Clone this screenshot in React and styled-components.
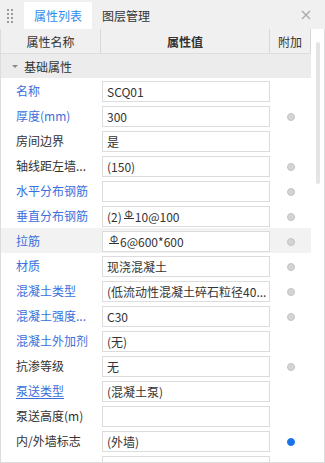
import React from "react";
import styled, { createGlobalStyle } from "styled-components";

const GlobalStyle = createGlobalStyle`
  html, body {
    margin: 0;
    padding: 0;
    background: #ffffff;
  }
  * {
    box-sizing: border-box;
  }
`;

const rows = [
  { name: "名称", value: "SCQ01", link: true, dot: "" },
  { name: "厚度(mm)", value: "300", link: true, dot: "gray" },
  { name: "房间边界", value: "是", dot: "" },
  { name: "轴线距左墙...", value: "(150)", dot: "gray" },
  { name: "水平分布钢筋", value: "", link: true, dot: "gray" },
  { name: "垂直分布钢筋", value: ["(2)", "10@100"], link: true, dot: "gray" },
  { name: "拉筋", value: ["", "6@600*600"], link: true, dot: "gray", active: true },
  { name: "材质", value: "现浇混凝土", link: true, dot: "gray" },
  { name: "混凝土类型", value: "(低流动性混凝土碎石粒径40...", link: true, dot: "gray" },
  { name: "混凝土强度...", value: "C30", link: true, dot: "gray" },
  { name: "混凝土外加剂", value: "(无)", link: true, dot: "" },
  { name: "抗渗等级", value: "无", dot: "gray" },
  { name: "泵送类型", value: "(混凝土泵)", link: true, underline: true, dot: "" },
  { name: "泵送高度(m)", value: "", dot: "" },
  { name: "内/外墙标志", value: "(外墙)", dot: "blue" },
  { name: "", value: "", dot: "" },
];

const PropertyPanel = () => {
  return (
    <Panel>
      <TabBar>
        <Handle>
          {Array.from({ length: 8 }).map((_, i) => (
            <span key={i} />
          ))}
        </Handle>
        <Tab active>属性列表</Tab>
        <Tab>图层管理</Tab>
        <Close>
          <svg width="10" height="10" viewBox="0 0 10 10">
            <path d="M1 1L9 9M9 1L1 9" stroke="#a8a8a8" strokeWidth="1.2" />
          </svg>
        </Close>
      </TabBar>
      <Body>
        <Table>
          <HeaderRow>
            <HeadCell>属性名称</HeadCell>
            <HeadCell strong>属性值</HeadCell>
            <HeadCell>附加</HeadCell>
          </HeaderRow>
          <GroupRow>
            <Caret />
            基础属性
          </GroupRow>
          {rows.map((row, i) => (
            <Row key={i} active={row.active}>
              <Label link={row.link} underline={row.underline}>
                {row.name}
              </Label>
              <ValueCell>
                <ValueBox>
                  {Array.isArray(row.value) ? (
                    <>
                      {row.value[0]}
                      <Rebar>Φ</Rebar>
                      {row.value[1]}
                    </>
                  ) : (
                    row.value
                  )}
                </ValueBox>
              </ValueCell>
              <DotCell>{row.dot && <Dot kind={row.dot} />}</DotCell>
            </Row>
          ))}
        </Table>
        <Scroll>
          <Thumb />
        </Scroll>
      </Body>
    </Panel>
  );
};

const Panel = styled.div`
  width: 325px;
  height: 463px;
  display: flex;
  flex-direction: column;
  overflow: hidden;
  font-family: "Noto Sans CJK SC", "Noto Sans", sans-serif;
  font-size: 12px;
  color: #333333;
`;

const TabBar = styled.div`
  height: 29px;
  flex: none;
  display: flex;
  align-items: flex-end;
  background: #f0f0f0;
`;

const Handle = styled.div`
  width: 24px;
  height: 27px;
  display: grid;
  grid-template-columns: 2px 2px;
  grid-auto-rows: 2px;
  column-gap: 2px;
  row-gap: 2px;
  align-content: center;
  padding-left: 7px;
  span {
    background: #9a9a9a;
  }
`;

const Tab = styled.div`
  height: 27px;
  padding: 0 10px;
  display: flex;
  align-items: center;
  background: ${({ active }) => (active ? "#ffffff" : "transparent")};
  color: ${({ active }) => (active ? "#2d8cf0" : "#333333")};
`;

const Close = styled.div`
  margin-left: auto;
  height: 29px;
  width: 30px;
  display: flex;
  align-items: center;
  justify-content: center;
  padding-right: 8px;
`;

const Body = styled.div`
  flex: 1;
  display: flex;
  border: 1px solid #dcdcdc;
  border-top: none;
  overflow: hidden;
`;

const Table = styled.div`
  width: 310px;
  flex: none;
  display: flex;
  flex-direction: column;
`;

const cols = "100px 169px 41px";

const HeaderRow = styled.div`
  display: grid;
  grid-template-columns: ${cols};
  height: 25px;
  flex: none;
  background: #f0f0f0;
  border-bottom: 1px solid #dedede;
`;

const HeadCell = styled.div`
  display: flex;
  align-items: center;
  justify-content: center;
  border-right: 1px solid #d8d8d8;
  font-weight: ${({ strong }) => (strong ? 700 : 400)};
  color: #333333;
`;

const GroupRow = styled.div`
  height: 24px;
  flex: none;
  display: flex;
  align-items: center;
  gap: 6px;
  padding-left: 11px;
  background: #ececec;
`;

const Caret = styled.span`
  width: 0;
  height: 0;
  border-left: 3px solid transparent;
  border-right: 3px solid transparent;
  border-top: 3px solid #8a8a8a;
`;

const Row = styled.div`
  display: grid;
  grid-template-columns: ${cols};
  height: 25px;
  flex: none;
  background: ${({ active }) => (active ? "#f2f2f2" : "#ffffff")};
`;

const Label = styled.div`
  display: flex;
  align-items: center;
  padding-left: 15px;
  white-space: nowrap;
  overflow: hidden;
  color: ${({ link }) => (link ? "#3a6fdc" : "#333333")};
  text-decoration: ${({ underline }) => (underline ? "underline" : "none")};
  text-underline-offset: 2px;
`;

const ValueCell = styled.div`
  padding: 3px 0 1px 1px;
`;

const ValueBox = styled.div`
  height: 21px;
  border: 1px solid #dcdcdc;
  background: #ffffff;
  display: flex;
  align-items: center;
  padding-left: 4px;
  white-space: nowrap;
  overflow: hidden;
  color: #333333;
`;

const Rebar = styled.span`
  display: inline-block;
  font-size: 10px;
  line-height: 9px;
  margin: 0 1px 0 2px;
  padding: 0 1px;
  border-bottom: 1px solid #333333;
  transform: translateY(-3px);
`;

const DotCell = styled.div`
  display: flex;
  align-items: center;
  justify-content: center;
  padding-top: 2px;
`;

const Dot = styled.span`
  width: 8px;
  height: 8px;
  border-radius: 50%;
  background: ${({ kind }) => (kind === "blue" ? "#1a73e8" : "#d4d4d4")};
  border: 1px solid ${({ kind }) => (kind === "blue" ? "#1a73e8" : "#c4c4c4")};
`;

const Scroll = styled.div`
  flex: 1;
  padding: 13px 0 0 5px;
`;

const Thumb = styled.div`
  width: 4px;
  height: 142px;
  border-radius: 2px;
  background: #e4e4e4;
`;

export default function App() {
  return (
    <>
      <GlobalStyle />
      <PropertyPanel />
    </>
  );
}
